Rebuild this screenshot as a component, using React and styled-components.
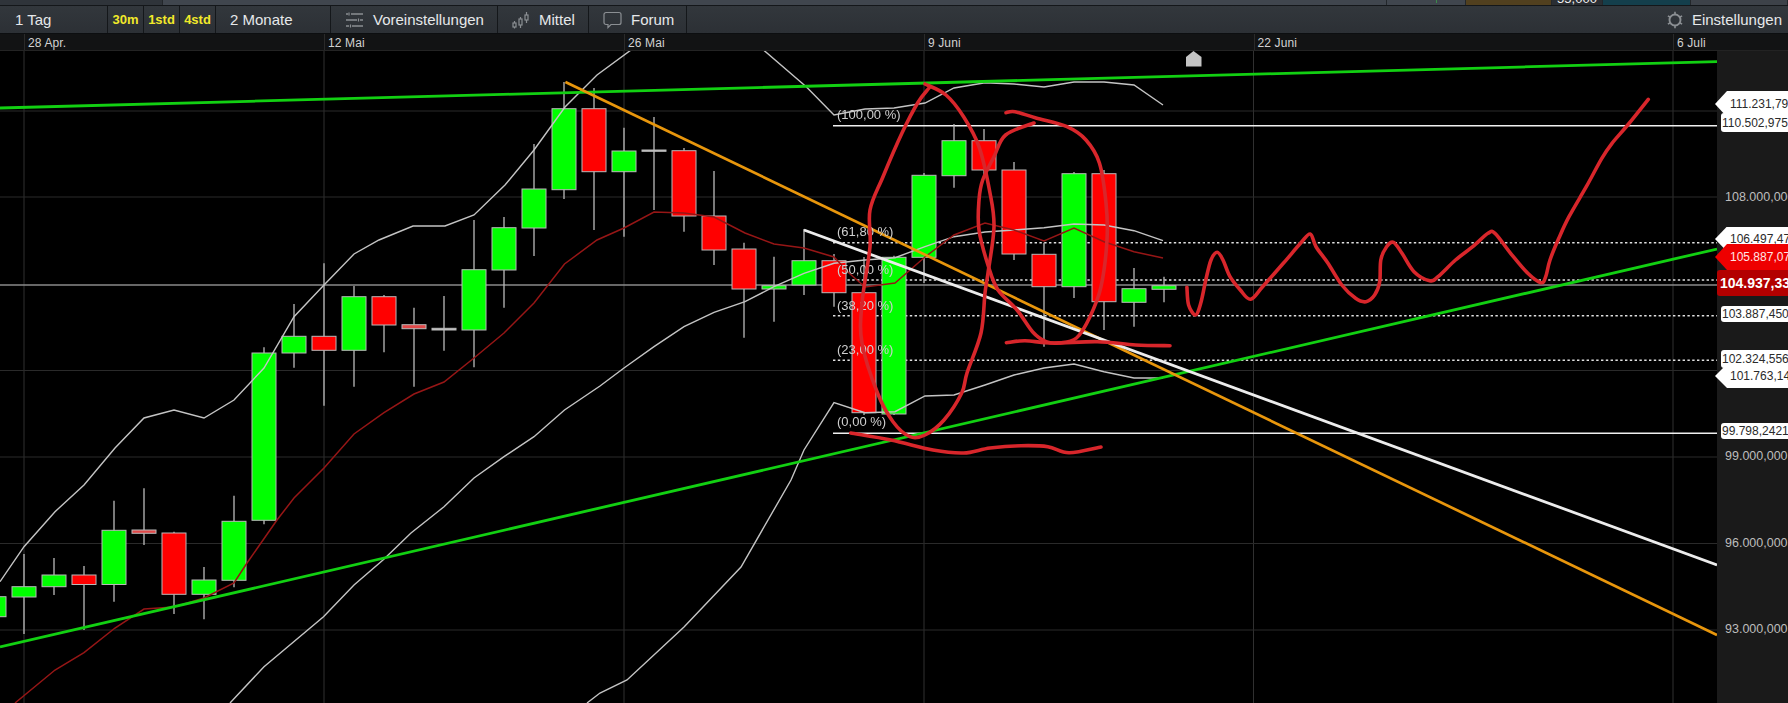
import React from "react";
import styled, { createGlobalStyle } from "styled-components";

const Global = createGlobalStyle`
  html, body { margin: 0; padding: 0; background: #000; overflow: hidden; }
  #root { width: 1788px; height: 703px; overflow: hidden; }
  * { box-sizing: border-box; }
`;

const Page = styled.div`
  width: 1788px;
  height: 703px;
  display: flex;
  flex-direction: column;
  font-family: "Liberation Sans", Arial, sans-serif;
  background: #000;
  overflow: hidden;
`;

const TopStrip = styled.div`
  height: 6px;
  flex: none;
  display: flex;
  border-bottom: 1px solid #14171a;
  overflow: hidden;
`;
const StripSegment = styled.div`
  width: ${(p) => p.$w}px;
  flex: ${(p) => (p.$w ? "none" : "1")};
  background: ${(p) => p.$bg};
  border-right: 1px solid #23272b;
  position: relative;
  color: #eee;
  font-size: 13px;
  line-height: 10px;
  text-align: center;
  white-space: nowrap;
`;
const ClippedValue = styled.span`
  display: block;
  margin-top: -6px;
`;
const GreenMark = styled.i`
  position: absolute;
  left: 49px;
  top: 0;
  width: 1px;
  height: 3px;
  background: #3a8a4a;
`;

const Toolbar = styled.div`
  height: 28px;
  flex: none;
  display: flex;
  background: linear-gradient(#32373c, #2c3035);
  border-bottom: 1px solid #0c0e10;
`;
const ToolCell = styled.div`
  width: ${(p) => p.$w}px;
  flex: none;
  height: 100%;
  display: flex;
  align-items: center;
  justify-content: ${(p) => (p.$center ? "center" : "flex-start")};
  gap: ${(p) => p.$gap || 0}px;
  padding-left: ${(p) => p.$pad || 0}px;
  border-right: 1px solid #14171a;
  color: ${(p) => (p.$hot ? "#f2e92a" : "#e6e8ea")};
  font-size: ${(p) => (p.$hot ? 13 : 15)}px;
  font-weight: ${(p) => (p.$hot ? 700 : 400)};
  white-space: nowrap;
`;
const ToolSpacer = styled.div`
  flex: 1;
`;
const SettingsCell = styled.div`
  display: flex;
  align-items: center;
  gap: 8px;
  padding-right: 6px;
  color: #e6e8ea;
  font-size: 15px;
  white-space: nowrap;
`;
const ToolIcon = styled.svg`
  flex: none;
  fill: none;
  stroke: #8b8f93;
  stroke-width: 1.2;
`;

const DateRow = styled.div`
  height: 17px;
  flex: none;
  display: flex;
  background: #121314;
  border-bottom: 1px solid #232323;
`;
const DateCell = styled.div`
  width: ${(p) => p.$w}px;
  flex: ${(p) => (p.$w ? "none" : "1")};
  padding-left: 3px;
  padding-top: 1px;
  border-left: ${(p) => (p.$first ? "none" : "1px solid #2a2a2a")};
  color: #d2d2d2;
  font-size: 12px;
  line-height: 16px;
  letter-spacing: 0.12px;
  white-space: nowrap;
`;

const ChartRow = styled.div`
  flex: 1;
  display: flex;
  min-height: 0;
`;
const ChartSvg = styled.svg`
  width: 1717px;
  height: 652px;
  flex: none;
  display: block;
  background: #000;
  filter: blur(0.35px);
`;
const PctLabel = styled.text`
  font-size: 13px;
  fill: #cfcfcf;
  font-family: "Liberation Sans", Arial, sans-serif;
`;

const Axis = styled.div`
  flex: 1;
  position: relative;
  background: #1a1a1a;
`;
const AxisNumber = styled.div`
  position: absolute;
  left: 8px;
  top: ${(p) => p.$y - 51 - 8}px;
  height: 16px;
  line-height: 16px;
  font-size: 12.5px;
  color: #bdbdbd;
  white-space: nowrap;
`;
const Tag = styled.div`
  position: absolute;
  left: 4px;
  top: ${(p) => p.$top - 51}px;
  width: 80px;
  height: ${(p) => p.$h}px;
  padding-left: 1px;
  display: flex;
  align-items: center;
  background: #fff;
  color: #2a2a2a;
  font-size: 12px;
  border-radius: 3px 0 0 3px;
  white-space: nowrap;
  overflow: hidden;
`;
const PointedTag = styled.div`
  position: absolute;
  left: -2px;
  top: ${(p) => p.$top - 51}px;
  width: 80px;
  height: ${(p) => p.$h}px;
  padding-left: 15px;
  display: flex;
  align-items: center;
  background: ${(p) => p.$bg || "#fff"};
  color: ${(p) => p.$fg || "#2a2a2a"};
  font-size: 12px;
  clip-path: polygon(0 50%, 12px 0, 100% 0, 100% 100%, 12px 100%);
  white-space: nowrap;
`;
const LastPriceTag = styled.div`
  position: absolute;
  left: 0;
  top: ${270 - 51}px;
  width: 80px;
  height: 26px;
  padding-left: 3px;
  display: flex;
  align-items: center;
  background: #b30000;
  color: #fff;
  font-size: 14px;
  font-weight: 700;
  border-radius: 3px 0 0 3px;
  white-space: nowrap;
`;

// [center x, kind, wickTop, wickBottom, bodyTop, bodyBottom]
const UP = "#00ff00";
const DN = "#ff0000";
const candles = [
  [-6, UP, 590, 620, 596.7, 616.7],
  [24, UP, 554, 634, 586.7, 597],
  [54, UP, 558, 595, 575, 586.7],
  [84, DN, 566, 630, 575, 584.5],
  [114, UP, 500.7, 601.7, 530.3, 584.5],
  [144, "#e04848", 488.3, 545, 530, 533.3],
  [174, DN, 531.7, 614, 533, 594.3],
  [204, UP, 567, 619.3, 580, 594.3],
  [234, UP, 495.7, 587.3, 521.3, 580.3],
  [264, UP, 347.3, 524.3, 353, 520.3],
  [294, UP, 304, 367.7, 336.3, 353],
  [324, DN, 263.3, 405.7, 336.3, 350.3],
  [354, UP, 286, 386.7, 296.7, 350.3],
  [384, DN, 295, 352.3, 296.7, 325],
  [414, "#e04848", 307.7, 386.7, 324.7, 328.7],
  [444, "#c8c8c8", 296, 350.7, 328.3, 330],
  [474, UP, 220, 367.3, 269.7, 330],
  [504, UP, 217, 307.7, 227.7, 270],
  [534, UP, 144, 256, 189, 228],
  [564, UP, 82, 199, 108.7, 189.7],
  [594, DN, 88, 230, 108.7, 171.7],
  [624, UP, 127.7, 236.7, 151, 171.7],
  [654, "#c8c8c8", 117, 210, 150, 151.3],
  [684, DN, 148, 231.7, 150.7, 216],
  [714, DN, 171, 265, 216, 250],
  [744, DN, 242.7, 337.7, 249, 289],
  [774, UP, 256.7, 321.7, 285.7, 289],
  [804, UP, 229, 295, 260.7, 285],
  [834, DN, 254, 306.7, 260.7, 292.7],
  [864, DN, 257, 415, 292.7, 412.7],
  [894, UP, 255.7, 415, 257.3, 414],
  [924, UP, 173, 283, 175.3, 257.3],
  [954, UP, 124, 187.7, 140.7, 175.7],
  [984, DN, 129, 176, 140.7, 170],
  [1014, DN, 162, 260, 170, 254],
  [1044, DN, 242.7, 346.7, 254.3, 286.7],
  [1074, UP, 172, 298, 173.7, 286.7],
  [1104, DN, 170, 330, 173.7, 301.7],
  [1134, UP, 268, 326.7, 288.7, 302.3],
  [1164, UP, 276.7, 302.3, 285.7, 289.3],
];

const upperBand = [[0,581.7],[24,546.7],[55,511.7],[84,485],[115,448],[144,418],[174,410],[204,418],[234,400],[264,368],[294,316.7],[324,285],[354,254],[379,240],[413,226],[445,226],[474,215],[505,185],[534,150],[565,107],[597,75],[631,50],[640,40],[750,40],[763.5,50],[806.5,87],[834,115],[865,109],[894,108],[925,103],[954,88],[985,82.7],[1014,84],[1044,87],[1074,82],[1104,82],[1134,85],[1163,105]];
const midBand = [[230,703],[264,666.7],[323.5,616.7],[354,585],[383,560],[411,533],[444,506.7],[474,478],[504,456.7],[534,436.7],[564.5,410],[600,386],[624,368],[654,346.7],[684,326.7],[714,312.3],[745,301.7],[774,286.7],[804,273.3],[834,263.3],[865,260],[895,257.7],[925,246.7],[954,236.7],[985,232],[1014,230],[1044,227.7],[1074,224],[1104,225],[1134,230.7],[1163,240.7]];
const lowerBand = [[587,703],[600,693],[627,680],[684,627],[741,567],[791,480],[804,450],[834,402.7],[865,412.7],[895,411.7],[925,396],[954,395],[985,385],[1014,375],[1044,368],[1074,364],[1104,371.7],[1134,378],[1163,378]];
const maLine = [[15,703],[55,670],[84,652.7],[115,628],[144,609],[174,607],[204,598],[234,583],[247,563],[277,520],[294,498],[324,468],[354,434],[384,412.7],[414,394],[444,382],[474,358],[504,333],[534,303],[564.5,264],[597,240],[624,228],[654,212],[684,213],[714,217],[745,233],[774,244],[804,248],[834,257],[849,273],[865,287],[895,283],[925,257],[954,235],[985,223],[1014,230],[1044,241],[1074,228],[1104,241.7],[1134,251.7],[1163,258]];

const circleOne = [[925,84],[946,95],[963.6,116.7],[979,146.7],[990,193],[994,226.7],[988,273],[985,293],[981,333],[967,373],[961.7,393],[944,420],[925,435],[910,436.7],[893,421.7],[877.5,393],[862,343],[862,303],[870,246.7],[870,210],[883,176.7],[902,133],[917.6,103],[929,88]];
const circleTwo = [[1034,123],[1005.6,135],[994,156.7],[982.7,180],[979,200],[979,230],[988.5,266.7],[998,290],[1017,310],[1032.5,331.7],[1046,341.7],[1059,343],[1076.5,338],[1090,316.7],[1101,286.7],[1107,240],[1106,203],[1099.4,163],[1086,140],[1067,126.7],[1036,118],[1015,111.7],[1006,112.7]];
const supportStroke = [[1006.4,342.7],[1025,340.7],[1051.6,343],[1097.5,341.7],[1135.8,345],[1170,345.7]];
const lowStroke = [[850.7,433],[891,440],[933,450],[963.6,453],[990,448],[1021,445.7],[1047.8,446.7],[1069,452.7],[1101,447]];
const forecast = [[1186.9,287.3],[1188.6,305],[1195.5,315],[1200.7,303.3],[1205.8,280],[1211,260],[1217.2,252.3],[1223,260],[1230,276.7],[1240.3,290],[1250.6,299.3],[1262.6,286.7],[1283.3,263.3],[1300.5,243.3],[1310.2,234],[1316,246.7],[1328,263.3],[1341.8,285],[1355.6,298.3],[1366,301.7],[1374.6,295],[1379.7,281.7],[1380.8,260],[1386.6,246.7],[1393.5,242.3],[1402,253.3],[1414,271.7],[1429.7,280.7],[1438,276.7],[1455.5,260],[1472.7,246.7],[1488,233.3],[1495,233.3],[1510.6,253.3],[1527.8,273.3],[1541,282.7],[1545.7,276.7],[1550,260],[1558.8,238.3],[1569,216.7],[1586.3,186.7],[1601.8,158.3],[1612,143.3],[1627.7,125],[1648.3,99.3]];

const poly = (pts) => pts.map((p) => p.join(",")).join(" ");
const smooth = (pts) => {
  let d = `M${pts[0][0]} ${pts[0][1]}`;
  for (let i = 0; i < pts.length - 1; i++) {
    const a = pts[i - 1] || pts[i];
    const b = pts[i];
    const c = pts[i + 1];
    const e = pts[i + 2] || c;
    const c1 = [b[0] + (c[0] - a[0]) / 6, b[1] + (c[1] - a[1]) / 6];
    const c2 = [c[0] - (e[0] - b[0]) / 6, c[1] - (e[1] - b[1]) / 6];
    d += ` C${c1[0].toFixed(1)} ${c1[1].toFixed(1)} ${c2[0].toFixed(1)} ${c2[1].toFixed(1)} ${c[0]} ${c[1]}`;
  }
  return d;
};

const gridX = [24, 324, 624, 924, 1253.5, 1673];
const gridY = [111, 197, 370.5, 457, 543.5, 630];
const fibSolid = [125.7, 433.3];
const fibDotted = [242.7, 280, 315.7, 360.3];
const pctLabels = [
  ["(100,00 %)", 118.5],
  ["(61,80 %)", 236],
  ["(50,00 %)", 274],
  ["(38,20 %)", 310],
  ["(23,00 %)", 353.5],
  ["(0,00 %)", 426],
];
const scribbles = [circleOne, circleTwo, supportStroke, lowStroke, forecast];

function Chart() {
  return (
    <ChartSvg viewBox="0 51 1717 652">
      {gridX.map((x) => (
        <line key={x} x1={x} x2={x} y1={51} y2={703} stroke="#303030" strokeWidth="1" />
      ))}
      {gridY.map((y) => (
        <line key={y} x1={0} x2={1717} y1={y} y2={y} stroke="#2a2a2a" strokeWidth="1" />
      ))}
      <line x1={0} x2={1717} y1={285} y2={285} stroke="#8a8a8a" strokeWidth="1.4" />
      {fibSolid.map((y) => (
        <line key={y} x1={833} x2={1717} y1={y} y2={y} stroke="#f0f0f0" strokeWidth="1.6" />
      ))}
      {fibDotted.map((y) => (
        <line key={y} x1={833} x2={1717} y1={y} y2={y} stroke="#e0e0e0" strokeWidth="1.5" strokeDasharray="2.4 2.4" />
      ))}
      {candles.map(([x, color, wt, wb, bt, bb]) => (
        <g key={x}>
          <line x1={x} x2={x} y1={wt} y2={wb} stroke="#bcbcbc" strokeWidth="1.3" />
          <rect x={x - 12} y={bt} width={24} height={bb - bt} fill={color} stroke="#b9b9b9" strokeWidth="1" />
        </g>
      ))}
      <polyline points={poly(upperBand)} fill="none" stroke="#c4c4c4" strokeWidth="1.4" />
      <polyline points={poly(midBand)} fill="none" stroke="#c4c4c4" strokeWidth="1.4" />
      <polyline points={poly(lowerBand)} fill="none" stroke="#c4c4c4" strokeWidth="1.4" />
      <polyline points={poly(maLine)} fill="none" stroke="#961616" strokeWidth="1.5" />
      <line x1={0} y1={108} x2={1717} y2={61.7} stroke="#12d012" strokeWidth="2.8" />
      <line x1={0} y1={647} x2={1717} y2={249} stroke="#12d012" strokeWidth="2.8" />
      <line x1={565.4} y1={82} x2={1717} y2={635} stroke="#e8960c" strokeWidth="2.7" />
      <line x1={804} y1={230} x2={1717} y2={565} stroke="#ececec" strokeWidth="2.8" />
      <polygon points="1193.5,51 1201.5,57 1201.5,66.5 1186,66.5 1186,57" fill="#c4c4c4" />
      {pctLabels.map(([t, y]) => (
        <PctLabel key={t} x={837} y={y}>{t}</PctLabel>
      ))}
      {scribbles.map((pts, i) => (
        <path key={i} d={smooth(pts)} fill="none" stroke="#d8262b" strokeWidth="3.6" strokeLinecap="round" strokeLinejoin="round" />
      ))}
    </ChartSvg>
  );
}

const PresetsIcon = () => (
  <ToolIcon width="19" height="18" viewBox="0 0 19 18">
    <path d="M1 3h2M6 3h12M1 9h11M15 9h3M1 15h3M7 15h11" stroke="#8b8f93" strokeWidth="1.6" />
    <path d="M4 1.5v3M13.5 7.5v3M5.5 13.5v3" stroke="#8b8f93" strokeWidth="1.2" />
  </ToolIcon>
);
const CandlesIcon = () => (
  <ToolIcon width="18" height="18" viewBox="0 0 18 18">
    <path d="M2.5 10v2M2.5 16v1.5M8.5 6v2M8.5 14v3M14.5 1v3M14.5 9v3" />
    <rect x="1" y="12" width="3" height="4" />
    <rect x="7" y="8" width="3" height="6" />
    <rect x="13" y="4" width="3" height="5" />
  </ToolIcon>
);
const BubbleIcon = () => (
  <ToolIcon width="19" height="18" viewBox="0 0 19 18">
    <path d="M3 1.5h13a2 2 0 0 1 2 2v8a2 2 0 0 1-2 2H8l-3 3v-3H3a2 2 0 0 1-2-2v-8a2 2 0 0 1 2-2z" />
  </ToolIcon>
);
const GearIcon = () => (
  <ToolIcon width="18" height="18" viewBox="0 0 18 18">
    <circle cx="9" cy="9" r="5.5" strokeWidth="1.9" />
    <path d="M9 0.8v2.7M9 14.5v2.7M1.9 4.9l2.4 1.4M13.7 11.7l2.4 1.4M1.9 13.1l2.4-1.4M13.7 6.3l2.4-1.4" strokeWidth="1.6" />
  </ToolIcon>
);

export default function App() {
  return (
    <Page>
      <Global />
      <TopStrip>
        <StripSegment $w={163} $bg="#2f343a" />
        <StripSegment $w={1224} $bg="#40464e" />
        <StripSegment $w={79} $bg="#40464e"><GreenMark /></StripSegment>
        <StripSegment $w={86} $bg="#51401f" />
        <StripSegment $w={51} $bg="#2a2e33"><ClippedValue>55,000</ClippedValue></StripSegment>
        <StripSegment $w={88} $bg="#143f4c" />
        <StripSegment $bg="#3d4249" />
      </TopStrip>
      <Toolbar>
        <ToolCell $w={108} $pad={15}>1 Tag</ToolCell>
        <ToolCell $w={36} $center $hot>30m</ToolCell>
        <ToolCell $w={36} $center $hot>1std</ToolCell>
        <ToolCell $w={36} $center $hot>4std</ToolCell>
        <ToolCell $w={115} $pad={14}>2 Monate</ToolCell>
        <ToolCell $w={167} $pad={14} $gap={9}><PresetsIcon />Voreinstellungen</ToolCell>
        <ToolCell $w={91} $pad={14} $gap={9}><CandlesIcon />Mittel</ToolCell>
        <ToolCell $w={98} $pad={14} $gap={9}><BubbleIcon />Forum</ToolCell>
        <ToolSpacer />
        <SettingsCell><GearIcon />Einstellungen</SettingsCell>
      </Toolbar>
      <DateRow>
        <DateCell $w={24} $first />
        <DateCell $w={300}>28 Apr.</DateCell>
        <DateCell $w={300}>12 Mai</DateCell>
        <DateCell $w={300}>26 Mai</DateCell>
        <DateCell $w={329.5}>9 Juni</DateCell>
        <DateCell $w={419.5}>22 Juni</DateCell>
        <DateCell>6 Juli</DateCell>
      </DateRow>
      <ChartRow>
        <Chart />
        <Axis>
          <AxisNumber $y={197}>108.000,000</AxisNumber>
          <AxisNumber $y={456}>99.000,000</AxisNumber>
          <AxisNumber $y={543}>96.000,000</AxisNumber>
          <AxisNumber $y={629}>93.000,000</AxisNumber>
          <PointedTag $top={91} $h={26}>111.231,79</PointedTag>
          <Tag $top={113} $h={19}>110.502,975</Tag>
          <PointedTag $top={226.5} $h={25}>106.497,47</PointedTag>
          <PointedTag $top={244} $h={26} $bg="#ee0000" $fg="#ffe6e6">105.887,07</PointedTag>
          <LastPriceTag>104.937,33</LastPriceTag>
          <Tag $top={306} $h={16}>103.887,450</Tag>
          <Tag $top={350} $h={18}>102.324,556</Tag>
          <PointedTag $top={364} $h={24}>101.763,14</PointedTag>
          <Tag $top={423} $h={16}>99.798,2421</Tag>
        </Axis>
      </ChartRow>
    </Page>
  );
}
